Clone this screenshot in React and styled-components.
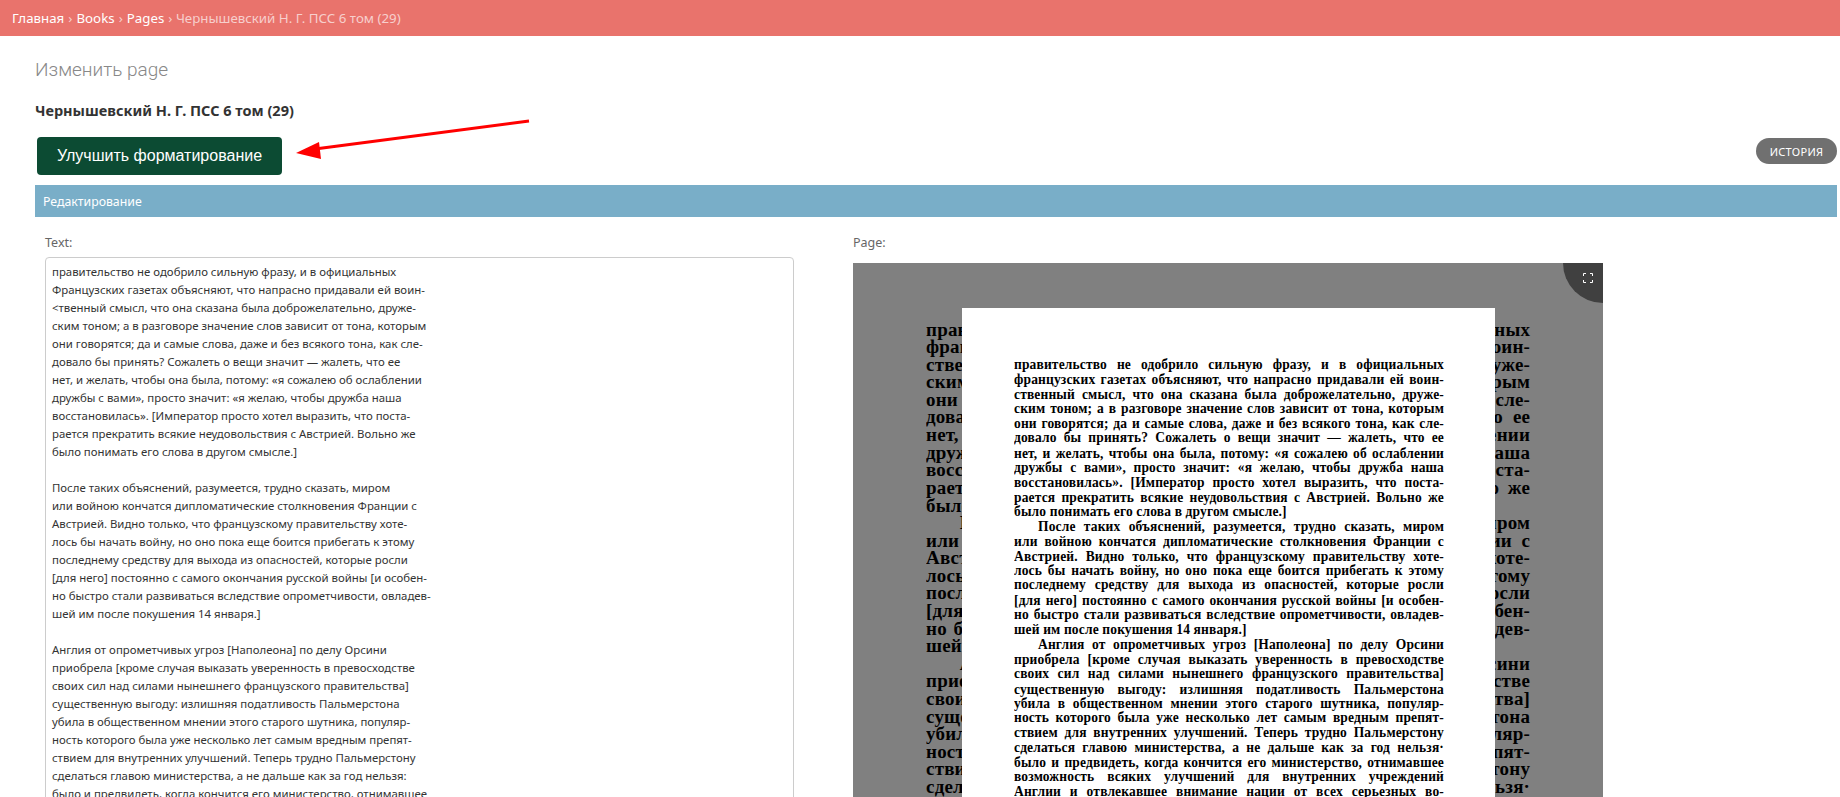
import React from "react";
import styled, { createGlobalStyle } from "styled-components";

const GlobalStyle = createGlobalStyle`
  html, body {
    margin: 0;
    padding: 0;
    height: 100%;
    overflow: hidden;
    background: #fff;
    font-family: "Noto Sans", "Open Sans", sans-serif;
    color: #333;
  }
`;

const Breadcrumbs = styled.div`
  height: 36px;
  box-sizing: border-box;
  padding: 0 12px;
  display: flex;
  align-items: center;
  gap: 4px;
  background: #e9736c;
  font-size: 13.3px;
  color: #f7cfcc;
  a {
    color: #fff;
    text-decoration: none;
  }
`;

const Content = styled.div`
  padding: 0 3px 0 35px;
`;

const Title = styled.h1`
  margin: 22px 0 0;
  font-family: Roboto, "Noto Sans", sans-serif;
  font-size: 19px;
  line-height: 24px;
  font-weight: 300;
  color: #888;
`;

const Subtitle = styled.h2`
  margin: 18px 0 0;
  font-size: 14.5px;
  line-height: 20px;
  font-weight: 700;
  color: #333;
`;

const ActionRow = styled.div`
  position: relative;
  margin-top: 17px;
  height: 48px;
  display: flex;
  align-items: flex-start;
  justify-content: space-between;
`;

const ImproveButton = styled.button`
  margin-left: 2px;
  width: 245px;
  height: 38px;
  border: 0;
  border-radius: 4px;
  background: #0c4b33;
  color: #fff;
  font-family: "Liberation Sans", Arial, sans-serif;
  font-size: 16px;
`;

const HistoryLink = styled.a`
  margin-top: 1px;
  width: 81px;
  height: 26px;
  display: flex;
  align-items: center;
  justify-content: center;
  border-radius: 13px;
  background: #707070;
  color: #fff;
  font-size: 11px;
  letter-spacing: 0.3px;
  text-transform: uppercase;
`;

const ArrowMark = styled.svg`
  position: absolute;
  left: 220px;
  top: -20px;
`;

const SectionBar = styled.div`
  height: 32px;
  box-sizing: border-box;
  padding: 0 8px;
  display: flex;
  align-items: center;
  background: #79aec8;
  color: #fff;
  font-size: 12.3px;
`;

const FieldRow = styled.div`
  display: grid;
  grid-template-columns: 749px 750px;
  column-gap: 59px;
  padding: 17px 0 0 10px;
`;

const FieldLabel = styled.label`
  display: block;
  height: 18px;
  font-size: 12.5px;
  line-height: 18px;
  color: #666;
`;

const TextField = styled.textarea`
  display: block;
  margin-top: 5px;
  width: 100%;
  height: 640px;
  box-sizing: border-box;
  padding: 5px 6px;
  border: 1px solid #ccc;
  border-radius: 4px;
  outline: 0;
  resize: none;
  overflow: hidden;
  white-space: pre;
  font-family: "Noto Sans", "Open Sans", sans-serif;
  font-size: 11.4px;
  line-height: 18px;
  color: #333;
`;

const ImageViewer = styled.div`
  position: relative;
  margin-top: 11px;
  height: 640px;
  overflow: hidden;
  background: #808080;
`;

const ScanText = styled.div`
  position: absolute;
  left: ${(p) => p.$left}px;
  top: ${(p) => p.$top}px;
  width: 430px;
  transform-origin: 0 0;
  transform: scale(${(p) => p.$scaleX}, ${(p) => p.$scaleY});
  font-family: "Liberation Serif", "Times New Roman", serif;
  font-size: 13.5px;
  font-weight: 700;
  letter-spacing: 0.15px;
  line-height: 13.3px;
  color: #000;
`;

const ScanLine = styled.div`
  white-space: nowrap;
  text-align: justify;
  text-align-last: ${(p) => (p.$last ? "left" : "justify")};
  padding-left: ${(p) => (p.$indent ? 24 : 0)}px;
`;

const WhitePage = styled.div`
  position: absolute;
  left: 109px;
  top: 45px;
  width: 533px;
  height: 600px;
  background: #fff;
`;

const FullscreenCorner = styled.div`
  position: absolute;
  top: 0;
  right: 0;
  width: 40px;
  height: 40px;
  box-sizing: border-box;
  padding: 10px 10px 0 0;
  display: flex;
  justify-content: flex-end;
  align-items: flex-start;
  background: #404040;
  border-bottom-left-radius: 40px;
`;

const textValue = `правительство не одобрило сильную фразу, и в официальных
Французских газетах объясняют, что напрасно придавали ей воин-
<твенный смысл, что она сказана была доброжелательно, друже-
ским тоном; а в разговоре значение слов зависит от тона, которым
они говорятся; да и самые слова, даже и без всякого тона, как сле-
довало бы принять? Сожалеть о вещи значит — жалеть, что ее
нет, и желать, чтобы она была, потому: «я сожалею об ослаблении
дружбы с вами», просто значит: «я желаю, чтобы дружба наша
восстановилась». [Император просто хотел выразить, что поста-
рается прекратить всякие неудовольствия с Австрией. Вольно же
было понимать его слова в другом смысле.]

После таких объяснений, разумеется, трудно сказать, миром
или войною кончатся дипломатические столкновения Франции с
Австрией. Видно только, что французскому правительству хоте-
лось бы начать войну, но оно пока еще боится прибегать к этому
последнему средству для выхода из опасностей, которые росли
[для него] постоянно с самого окончания русской войны [и особен-
но быстро стали развиваться вследствие опрометчивости, овладев-
шей им после покушения 14 января.]

Англия от опрометчивых угроз [Наполеона] по делу Орсини
приобрела [кроме случая выказать уверенность в превосходстве
своих сил над силами нынешнего французского правительства]
существенную выгоду: излишняя податливость Пальмерстона
убила в общественном мнении этого старого шутника, популяр-
ность которого была уже несколько лет самым вредным препят-
ствием для внутренних улучшений. Теперь трудно Пальмерстону
сделаться главою министерства, а не дальше как за год нельзя:
было и предвидеть, когда кончится его министерство, отнимавшее`;

const scanLines = [
  "правительство не одобрило сильную фразу, и в официальных",
  "французских газетах объясняют, что напрасно придавали ей воин-",
  "ственный смысл, что она сказана была доброжелательно, друже-",
  "ским тоном; а в разговоре значение слов зависит от тона, которым",
  "они говорятся; да и самые слова, даже и без всякого тона, как сле-",
  "довало бы принять? Сожалеть о вещи значит — жалеть, что ее",
  "нет, и желать, чтобы она была, потому: «я сожалею об ослаблении",
  "дружбы с вами», просто значит: «я желаю, чтобы дружба наша",
  "восстановилась». [Император просто хотел выразить, что поста-",
  "рается прекратить всякие неудовольствия с Австрией. Вольно же",
  "было понимать его слова в другом смысле.]",
  "+После таких объяснений, разумеется, трудно сказать, миром",
  "или войною кончатся дипломатические столкновения Франции с",
  "Австрией. Видно только, что французскому правительству хоте-",
  "лось бы начать войну, но оно пока еще боится прибегать к этому",
  "последнему средству для выхода из опасностей, которые росли",
  "[для него] постоянно с самого окончания русской войны [и особен-",
  "но быстро стали развиваться вследствие опрометчивости, овладев-",
  "шей им после покушения 14 января.]",
  "+Англия от опрометчивых угроз [Наполеона] по делу Орсини",
  "приобрела [кроме случая выказать уверенность в превосходстве",
  "своих сил над силами нынешнего французского правительства]",
  "существенную выгоду: излишняя податливость Пальмерстона",
  "убила в общественном мнении этого старого шутника, популяр-",
  "ность которого была уже несколько лет самым вредным препят-",
  "ствием для внутренних улучшений. Теперь трудно Пальмерстону",
  "сделаться главою министерства, а не дальше как за год нельзя·",
  "было и предвидеть, когда кончится его министерство, отнимавшее",
  "возможность всяких улучшений для внутренних учреждений",
  "Англии и отвлекавшее внимание нации от всех серьезных во-",
];

function ScanBlock({ left, top, scaleX, scaleY }) {
  return (
    <ScanText $left={left} $top={top} $scaleX={scaleX} $scaleY={scaleY}>
      {scanLines.map((line, i) => {
        const indent = line.startsWith("+");
        return (
          <ScanLine key={i} $indent={indent} $last={i === 10 || i === 18}>
            {indent ? line.slice(1) : line}
          </ScanLine>
        );
      })}
    </ScanText>
  );
}

export default function App() {
  return (
    <>
      <GlobalStyle />
      <Breadcrumbs>
        <a href="#home">Главная</a> › <a href="#books">Books</a> ›{" "}
        <a href="#pages">Pages</a> › Чернышевский Н. Г. ПСС 6 том (29)
      </Breadcrumbs>
      <Content>
        <Title>Изменить page</Title>
        <Subtitle>Чернышевский Н. Г. ПСС 6 том (29)</Subtitle>
        <ActionRow>
          <ImproveButton>Улучшить форматирование</ImproveButton>
          <ArrowMark width="290" height="60" viewBox="0 0 290 60">
            <line x1="274" y1="4" x2="60" y2="32" stroke="#f00" strokeWidth="3" />
            <polygon points="41,36 64,25 66,42" fill="#f00" />
          </ArrowMark>
          <HistoryLink>История</HistoryLink>
        </ActionRow>
        <SectionBar>Редактирование</SectionBar>
        <FieldRow>
          <div>
            <FieldLabel>Text:</FieldLabel>
            <TextField readOnly defaultValue={textValue} />
          </div>
          <div>
            <FieldLabel>Page:</FieldLabel>
            <ImageViewer>
              <ScanBlock left={73} top={58} scaleX={1.405} scaleY={1.323} />
              <WhitePage />
              <ScanBlock left={161} top={94} scaleX={1} scaleY={1.107} />
              <FullscreenCorner>
                <svg width="10" height="10" viewBox="0 0 10 10" fill="none" stroke="#fff" strokeWidth="1">
                  <path d="M.5 3V.5H3M7 .5h2.500V3M9.500 7v2.500H7M3 9.500H.5V7" />
                </svg>
              </FullscreenCorner>
            </ImageViewer>
          </div>
        </FieldRow>
      </Content>
    </>
  );
}
